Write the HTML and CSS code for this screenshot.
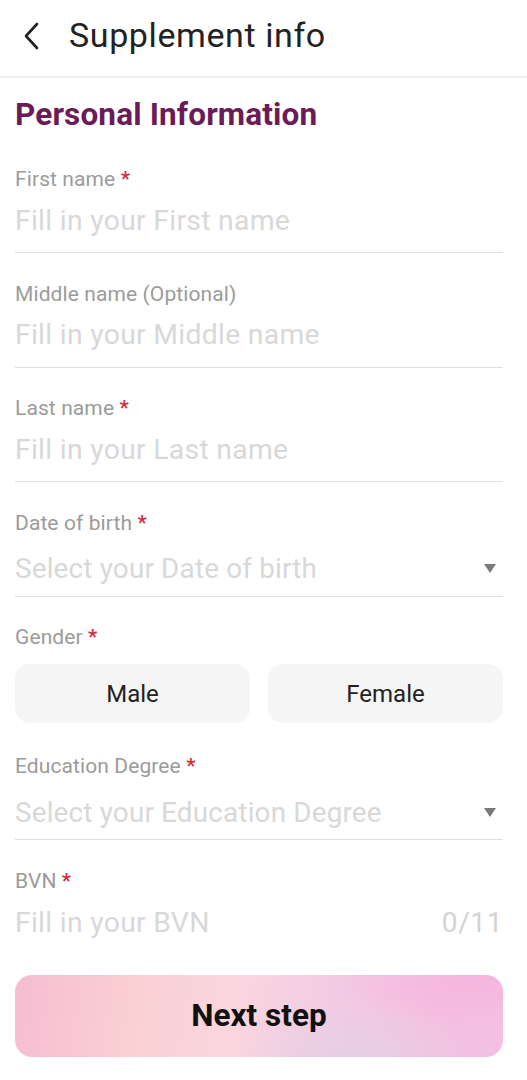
FILE: index.html
```html
<!DOCTYPE html>
<html>
<head>
<meta charset="utf-8">
<link rel="stylesheet" href="styles.css">
</head>
<body>
<header class="topbar">
  <svg class="back" width="20" height="28" viewBox="0 0 20 28"><path d="M15 2 L4 14 L15 26" fill="none" stroke="#222" stroke-width="2.6" stroke-linecap="round" stroke-linejoin="round"/></svg>
  <h1 class="title">Supplement info</h1>
</header>
<main class="content">
  <h2 class="section">Personal Information</h2>

  <div class="field">
    <div class="label">First name <span class="req">*</span></div>
    <div class="input"><span class="ph">Fill in your First name</span></div>
  </div>

  <div class="field">
    <div class="label">Middle name (Optional)</div>
    <div class="input"><span class="ph">Fill in your Middle name</span></div>
  </div>

  <div class="field">
    <div class="label">Last name <span class="req">*</span></div>
    <div class="input"><span class="ph">Fill in your Last name</span></div>
  </div>

  <div class="field">
    <div class="label">Date of birth <span class="req">*</span></div>
    <div class="input select"><span class="ph sel">Select your Date of birth</span><span class="caret"></span></div>
  </div>

  <div class="field gender">
    <div class="label">Gender <span class="req">*</span></div>
    <div class="choices">
      <div class="choice">Male</div>
      <div class="choice">Female</div>
    </div>
  </div>

  <div class="field">
    <div class="label">Education Degree <span class="req">*</span></div>
    <div class="input select"><span class="ph sel">Select your Education Degree</span><span class="caret"></span></div>
  </div>

  <div class="field last">
    <div class="label">BVN <span class="req">*</span></div>
    <div class="input noline"><span class="ph">Fill in your BVN</span><span class="count">0/11</span></div>
  </div>

  <button class="next">Next step</button>
</main>
</body>
</html>
```

FILE: styles.css
```css
* { box-sizing: border-box; }
html, body { margin: 0; padding: 0; background: #fff; }
body {
  width: 527px;
  font-family: Roboto, "Noto Sans", "Liberation Sans", sans-serif;
  color: #222;
}
.topbar {
  height: 78px;
  display: flex;
  align-items: center;
  padding: 0 0 6px 22px;
  border-bottom: 2px solid #efefef;
}
.back { display: block; margin-right: 27px; margin-top: 2px; }
.title {
  margin: 0;
  font-size: 34px;
  line-height: 40px;
  font-weight: 400;
  color: #222;
  letter-spacing: 0.6px;
}
.content { padding: 0 24px 0 15px; }
.section {
  margin: 0;
  padding-top: 18px;
  height: 89px;
  font-size: 31.5px;
  font-weight: 700;
  line-height: 38px;
  color: #6b1b57;
  letter-spacing: 0.15px;
}
.field { margin-bottom: 28.5px; }
.label {
  font-size: 21px;
  line-height: 24px;
  color: #9b9b9b;
  letter-spacing: 0.1px;
}
.req { color: #d42a3c; font-weight: 500; }
.input {
  height: 62px;
  display: flex;
  align-items: center;
  justify-content: space-between;
  border-bottom: 1.5px solid #dedede;
  padding-bottom: 3px;
}
.input.select { padding-top: 7px; padding-bottom: 0; }
.input.noline { border-bottom: none; }
.ph {
  font-size: 28.3px;
  color: #d8d8d8;
  letter-spacing: 0.3px;
}
.ph.sel {
  font-size: 27.8px;
  letter-spacing: 0.2px;
}
.caret {
  width: 0; height: 0;
  border-left: 6.5px solid transparent;
  border-right: 6.5px solid transparent;
  border-top: 9px solid #7a7a7a;
  margin-right: 7px;
  margin-top: 0;
}
.count {
  font-size: 28px;
  color: #d3d3d3;
  margin-right: 0;
  letter-spacing: 0.6px;
}
.gender .label { margin-bottom: 15px; }
.gender { margin-bottom: 31px; }
.choices {
  display: grid;
  grid-template-columns: 1fr 1fr;
  gap: 18px;
}
.choice {
  height: 59px;
  border-radius: 15px;
  background: #f5f5f5;
  display: flex;
  align-items: center;
  justify-content: center;
  font-size: 24px;
  color: #222;
}
.field.last { margin-bottom: 20px; }
.next {
  display: block;
  width: 100%;
  height: 82px;
  border: none;
  border-radius: 17px;
  font-family: Roboto, "Noto Sans", "Liberation Sans", sans-serif;
  font-size: 31.5px;
  font-weight: 700;
  color: #111;
  background:
    radial-gradient(ellipse 30% 60% at 95% 5%, rgba(246,180,222,0.9), rgba(246,180,222,0) 100%),
    radial-gradient(ellipse 25% 70% at 70% 100%, rgba(228,208,230,0.9), rgba(228,208,230,0) 100%),
    linear-gradient(100deg, #f6bcd2 0%, #fad0d3 25%, #f9d6df 45%, #f2cbe4 65%, #f5bfe0 85%, #f3c0e4 100%);
}
```
